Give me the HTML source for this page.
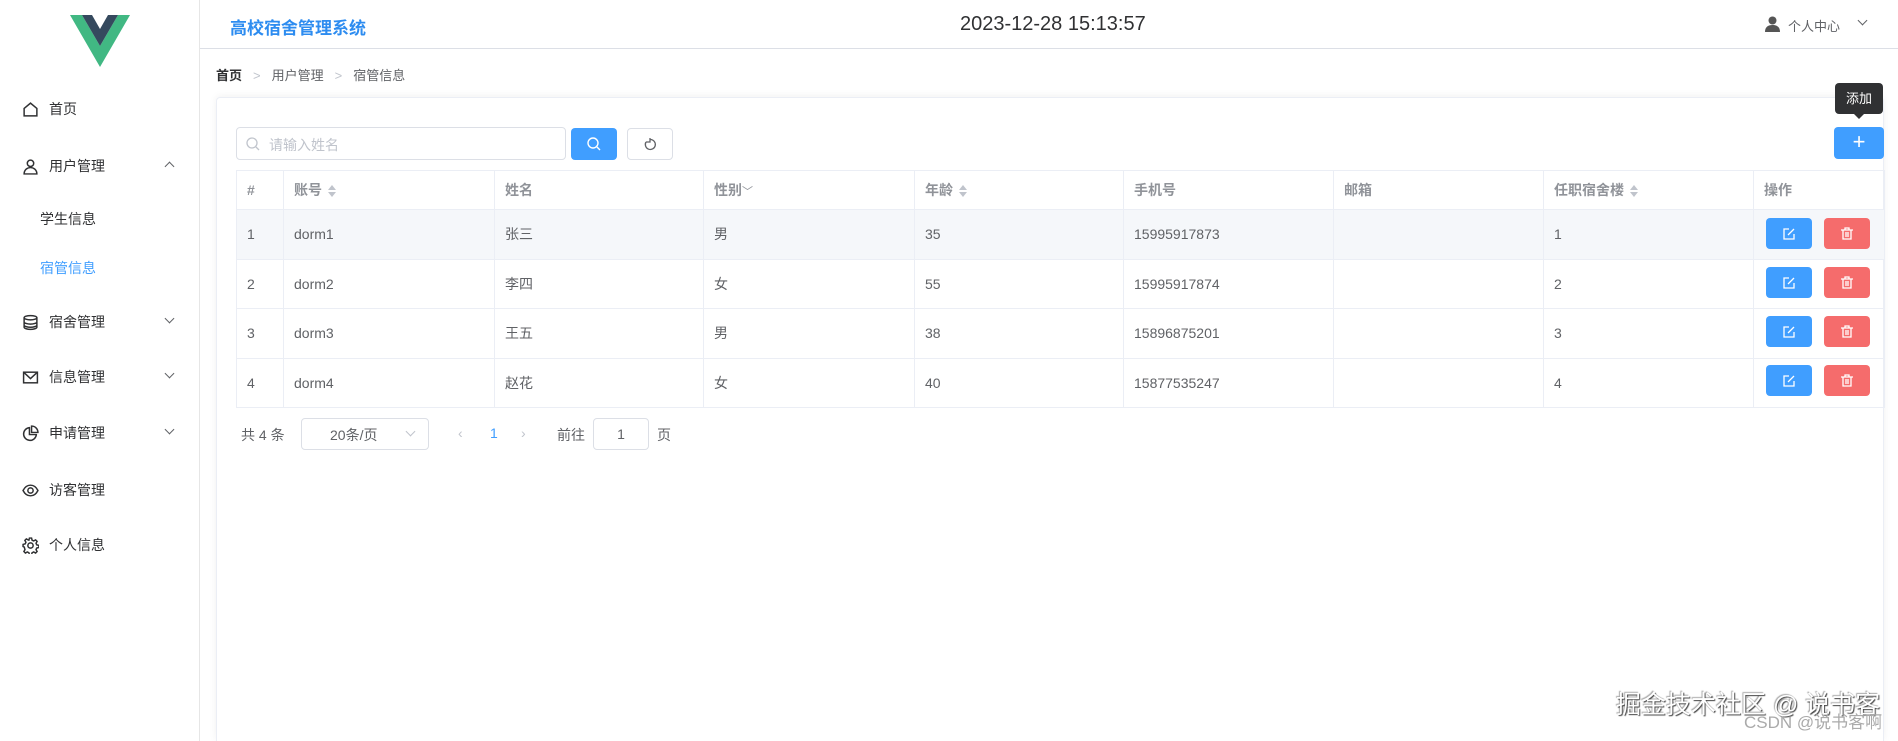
<!DOCTYPE html>
<html><head><meta charset="utf-8"><style>
*{margin:0;padding:0;box-sizing:border-box}
html{width:1898px;height:741px;overflow:hidden}
body{width:1898px;height:741px;overflow:hidden;background:#fff;font-family:"Liberation Sans","Noto Sans CJK SC",sans-serif;color:#303133;position:relative}
.a{position:absolute}
.side{left:0;top:0;width:200px;height:741px;border-right:1px solid #e6e6e6;background:#fff}
.mi{position:absolute;left:22px;font-size:14px;color:#303133;display:flex;align-items:center;height:20px}
.mi svg{width:17px;height:17px;margin-right:10px;fill:none;stroke:#303133;stroke-width:1.4}
.arr{position:absolute;left:166px;width:7px;height:7px;border-right:1.2px solid #606266;border-bottom:1.2px solid #606266;transform:rotate(45deg)}
.hdr{left:200px;top:0;right:0;height:49px;border-bottom:1.5px solid #dcdfe6}
.card{left:216px;top:97px;width:1668px;height:644px;border:1px solid #ebeef5;border-bottom:none;border-radius:4px 4px 0 0;box-shadow:0 -1px 8px rgba(0,0,0,.06)}
table{position:absolute;left:236px;top:170px;border-collapse:collapse;font-size:14px;color:#606266}
td,th{border:1px solid #ebeef5;padding:0 0 0 10px;text-align:left;height:49.5px}
th{height:39px;color:#909399;font-weight:bold}
tr.h td{background:#f5f7fa}
.srt{display:inline-block;vertical-align:middle;margin-left:6px;width:8px;height:12px;position:relative}
.srt:before,.srt:after{content:"";position:absolute;left:0;border-left:4px solid transparent;border-right:4px solid transparent}
.srt:before{top:0;border-bottom:5px solid #c0c4cc}
.srt:after{bottom:0;border-top:5px solid #c0c4cc}
.bt{position:absolute;width:46px;height:31px;border-radius:4px;display:flex;align-items:center;justify-content:center}
.e{background:#409eff}.d{background:#f56c6c}
</style></head><body>
<div class="a side">
<svg class="a" style="left:70px;top:15px" width="60" height="52" viewBox="0 0 60 52"><polygon points="0,0 12,0 30,31 48,0 60,0 30,52" fill="#41b883"/><polygon points="12,0 22,0 30,14 38,0 48,0 30,31" fill="#35495e"/></svg>
<div class="mi" style="top:99px"><svg viewBox="0 0 16 16"><path d="M2 7L8 2l6 5v7H2z"/></svg>首页</div>
<div class="mi" style="top:156px"><svg viewBox="0 0 16 16"><circle cx="8" cy="5" r="3"/><path d="M2 15c0-4 3-6 6-6s6 2 6 6z"/></svg>用户管理</div>
<div class="arr" style="top:163px;transform:rotate(225deg)"></div>
<div class="mi" style="top:209px;left:40px">学生信息</div>
<div class="mi" style="top:258px;left:40px;color:#409eff">宿管信息</div>
<div class="mi" style="top:312px"><svg viewBox="0 0 16 16"><ellipse cx="8" cy="3.5" rx="6" ry="2"/><path d="M2 3.5v9c0 1 3 2 6 2s6-1 6-2v-9M2 7.5c0 1 3 2 6 2s6-1 6-2M2 10.5c0 1 3 2 6 2s6-1 6-2"/></svg>宿舍管理</div>
<div class="arr" style="top:315px"></div>
<div class="mi" style="top:367px"><svg viewBox="0 0 16 16"><rect x="1.5" y="3" width="13" height="10"/><path d="M1.5 3L8 9l6.5-6"/></svg>信息管理</div>
<div class="arr" style="top:370px"></div>
<div class="mi" style="top:423px"><svg viewBox="0 0 16 16"><path d="M7 2.5a6 6 0 1 0 6.5 6.5H7z"/><path d="M9 1v6h6A6 6 0 0 0 9 1z"/></svg>申请管理</div>
<div class="arr" style="top:426px"></div>
<div class="mi" style="top:480px"><svg viewBox="0 0 16 16"><path d="M1 8c2-4 5-5 7-5s5 1 7 5c-2 4-5 5-7 5s-5-1-7-5z"/><circle cx="8" cy="8" r="2.5"/></svg>访客管理</div>
<div class="mi" style="top:535px"><svg viewBox="0 0 16 16"><circle cx="8" cy="8" r="2.5"/><path d="M7 1h2l.5 2 1.5.7 1.8-1 1.4 1.4-1 1.8.7 1.5 2 .5v2l-2 .5-.7 1.5 1 1.8-1.4 1.4-1.8-1-1.5.7-.5 2H7l-.5-2-1.5-.7-1.8 1-1.4-1.4 1-1.8L2.1 9.5 1 9V7l2-.5.7-1.5-1-1.8 1.4-1.4 1.8 1L6.5 3z"/></svg>个人信息</div>
</div>
<div class="a hdr">
<div class="a" style="left:30px;top:14px;font-size:17px;color:#2d8cf0;font-weight:bold">高校宿舍管理系统</div>
<div class="a" style="left:760px;top:13px;font-size:20px;color:#303133">2023-12-28 15:13:57</div>
<svg class="a" style="left:1565px;top:16px" width="15" height="16" viewBox="0 0 15 16"><circle cx="7.5" cy="4.5" r="4" fill="#555"/><path d="M0 16c0-5 3-7 7.5-7S15 11 15 16z" fill="#555"/></svg>
<div class="a" style="left:1588px;top:16px;font-size:13px;color:#606266">个人中心</div>
<div class="a" style="left:1659px;top:17px;width:7px;height:7px;border-right:1px solid #606266;border-bottom:1px solid #606266;transform:rotate(45deg)"></div>
</div>
<div class="a" style="left:216px;top:65px;font-size:13px;color:#606266"><b style="color:#303133">首页</b><span style="color:#c0c4cc;margin:0 11px">&gt;</span>用户管理<span style="color:#c0c4cc;margin:0 11px">&gt;</span>宿管信息</div>
<div class="a card"></div>
<div class="a" style="left:236px;top:127px;width:330px;height:33px;border:1px solid #dcdfe6;border-radius:4px;font-size:14px;color:#c0c4cc;padding:7px 0 0 32px">请输入姓名</div>
<svg class="a" style="left:246px;top:137px" width="14" height="14" viewBox="0 0 14 14" fill="none" stroke="#c0c4cc" stroke-width="1.3"><circle cx="6" cy="6" r="5"/><path d="M10 10l3 3"/></svg>
<div class="a" style="left:571px;top:128px;width:46px;height:32px;background:#409eff;border-radius:4px"><svg style="margin:9px 0 0 16px" width="14" height="14" viewBox="0 0 14 14" fill="none" stroke="#fff" stroke-width="1.4"><circle cx="6" cy="6" r="5"/><path d="M10 10l3 3"/></svg></div>
<div class="a" style="left:627px;top:128px;width:46px;height:32px;border:1px solid #dcdfe6;border-radius:4px"><svg style="margin:9px 0 0 16px" width="13" height="13" viewBox="0 0 13 13" fill="none" stroke="#606266" stroke-width="1.3"><path d="M2 4a5 5 0 1 0 4.5-2.5"/><path d="M6 0v4H2"/></svg></div>
<div class="a" style="left:1835px;top:83px;width:48px;height:31px;background:#303133;border-radius:4px;color:#fff;font-size:13px;text-align:center;line-height:31px">添加</div>
<div class="a" style="left:1853px;top:113px;border-left:6px solid transparent;border-right:6px solid transparent;border-top:6px solid #303133"></div>
<div class="a" style="left:1834px;top:127px;width:50px;height:32px;background:#409eff;border-radius:4px;color:#fff;font-size:22px;text-align:center;line-height:30px;font-weight:200">+</div>
<table>
<tr><th style="width:47px">#</th><th style="width:211px">账号<i class="srt"></i></th><th style="width:209px">姓名</th><th style="width:211px">性别<span style="font-weight:normal;font-size:11px">﹀</span></th><th style="width:209px">年龄<i class="srt"></i></th><th style="width:210px">手机号</th><th style="width:210px">邮箱</th><th style="width:210px">任职宿舍楼<i class="srt"></i></th><th style="width:131px">操作</th></tr>
<tr class="h"><td>1</td><td>dorm1</td><td>张三</td><td>男</td><td>35</td><td>15995917873</td><td></td><td>1</td><td></td></tr>
<tr><td>2</td><td>dorm2</td><td>李四</td><td>女</td><td>55</td><td>15995917874</td><td></td><td>2</td><td></td></tr>
<tr><td>3</td><td>dorm3</td><td>王五</td><td>男</td><td>38</td><td>15896875201</td><td></td><td>3</td><td></td></tr>
<tr><td>4</td><td>dorm4</td><td>赵花</td><td>女</td><td>40</td><td>15877535247</td><td></td><td>4</td><td></td></tr>
</table>
<div class="bt e" style="left:1766px;top:218px"><svg width="12" height="12" viewBox="0 0 12 12" fill="none" stroke="#fff" stroke-width="1.3"><path d="M6 1H1v10h10V6M5 7l6-6"/></svg></div>
<div class="bt d" style="left:1824px;top:218px"><svg width="12" height="13" viewBox="0 0 12 13" fill="none" stroke="#fff" stroke-width="1.3"><path d="M0 3h12M4 3V1h4v2M2 3v9h8V3M5 5v5M7 5v5"/></svg></div>
<div class="bt e" style="left:1766px;top:267px"><svg width="12" height="12" viewBox="0 0 12 12" fill="none" stroke="#fff" stroke-width="1.3"><path d="M6 1H1v10h10V6M5 7l6-6"/></svg></div>
<div class="bt d" style="left:1824px;top:267px"><svg width="12" height="13" viewBox="0 0 12 13" fill="none" stroke="#fff" stroke-width="1.3"><path d="M0 3h12M4 3V1h4v2M2 3v9h8V3M5 5v5M7 5v5"/></svg></div>
<div class="bt e" style="left:1766px;top:316px"><svg width="12" height="12" viewBox="0 0 12 12" fill="none" stroke="#fff" stroke-width="1.3"><path d="M6 1H1v10h10V6M5 7l6-6"/></svg></div>
<div class="bt d" style="left:1824px;top:316px"><svg width="12" height="13" viewBox="0 0 12 13" fill="none" stroke="#fff" stroke-width="1.3"><path d="M0 3h12M4 3V1h4v2M2 3v9h8V3M5 5v5M7 5v5"/></svg></div>
<div class="bt e" style="left:1766px;top:365px"><svg width="12" height="12" viewBox="0 0 12 12" fill="none" stroke="#fff" stroke-width="1.3"><path d="M6 1H1v10h10V6M5 7l6-6"/></svg></div>
<div class="bt d" style="left:1824px;top:365px"><svg width="12" height="13" viewBox="0 0 12 13" fill="none" stroke="#fff" stroke-width="1.3"><path d="M0 3h12M4 3V1h4v2M2 3v9h8V3M5 5v5M7 5v5"/></svg></div>
<div class="a" style="left:241px;top:425px;font-size:14px;color:#606266">共 4 条</div>
<div class="a" style="left:301px;top:418px;width:128px;height:32px;border:1px solid #dcdfe6;border-radius:4px;font-size:14px;color:#606266;padding:6px 0 0 28px">20条/页</div>
<div class="a" style="left:407px;top:428px;width:7px;height:7px;border-right:1px solid #c0c4cc;border-bottom:1px solid #c0c4cc;transform:rotate(45deg)"></div>
<div class="a" style="left:458px;top:425px;font-size:14px;color:#c0c4cc">‹</div>
<div class="a" style="left:490px;top:425px;font-size:14px;color:#409eff">1</div>
<div class="a" style="left:521px;top:425px;font-size:14px;color:#c0c4cc">›</div>
<div class="a" style="left:557px;top:425px;font-size:14px;color:#606266">前往</div>
<div class="a" style="left:593px;top:418px;width:56px;height:32px;border:1px solid #dcdfe6;border-radius:4px;font-size:14px;color:#606266;text-align:center;line-height:30px">1</div>
<div class="a" style="left:657px;top:425px;font-size:14px;color:#606266">页</div>
<div class="a" style="left:1616px;top:690px;font-size:25px;line-height:30px;color:#fff;white-space:nowrap;text-shadow:1px 1px 1px #444,-1px -1px 1px #aaa">掘金技术社区 @ 说书客</div>
<div class="a" style="left:1744px;top:713px;font-size:17px;line-height:20px;color:#aaa;white-space:nowrap">CSDN @说书客啊</div>
</body></html>
